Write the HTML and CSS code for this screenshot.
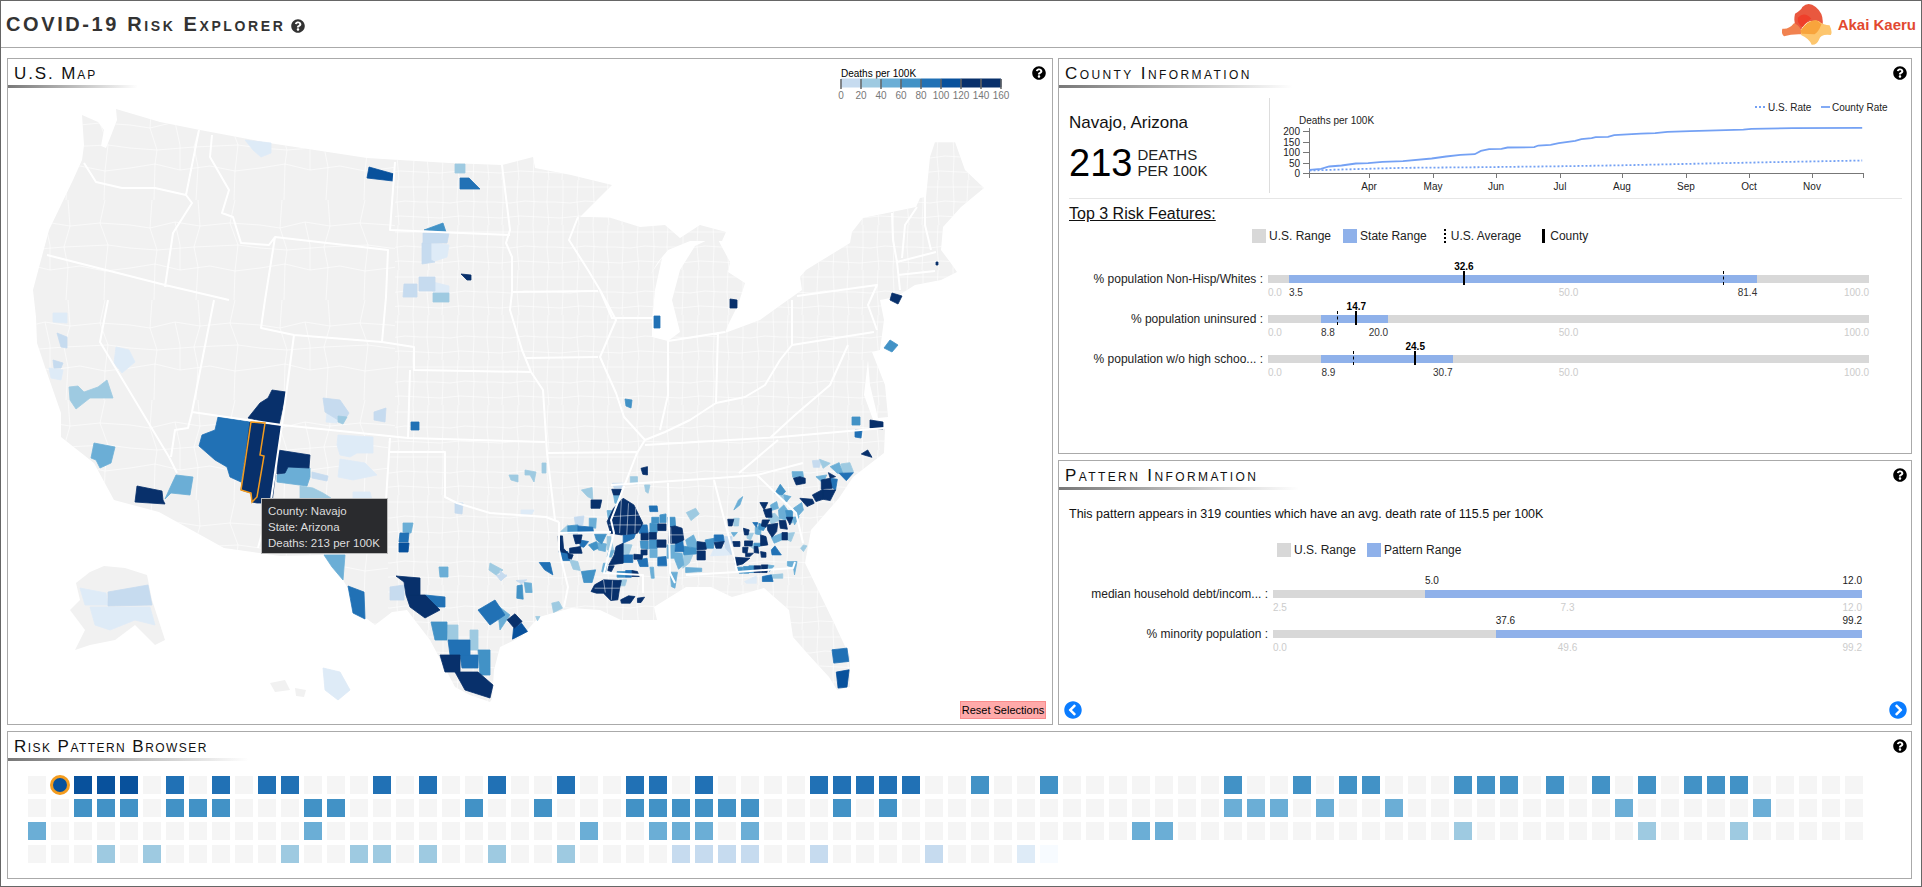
FILE: index.html
```html
<!DOCTYPE html>
<html lang="en">
<head>
<meta charset="utf-8">
<title>COVID-19 Risk Explorer</title>
<link rel="stylesheet" href="styles.css">
</head>
<body>
<svg class="defs" width="0" height="0" aria-hidden="true">
  <symbol id="i-help" viewBox="0 0 512 512"><path d="M504 256c0 136.997-111.043 248-248 248S8 392.997 8 256C8 119.083 119.043 8 256 8s248 111.083 248 248zM262.655 90c-54.497 0-89.255 22.957-116.549 63.758-3.536 5.286-2.353 12.415 2.715 16.258l34.699 26.31c5.205 3.947 12.621 3.008 16.665-2.122 17.864-22.658 30.113-35.797 57.303-35.797 20.429 0 45.698 13.148 45.698 32.958 0 14.976-12.363 22.667-32.534 33.976C247.128 238.528 216 254.941 216 296v4c0 6.627 5.373 12 12 12h56c6.627 0 12-5.373 12-12v-1.333c0-28.462 83.186-29.647 83.186-106.667 0-58.002-60.165-102-116.531-102zM256 338c-25.365 0-46 20.635-46 46 0 25.364 20.635 46 46 46s46-20.636 46-46c0-25.365-20.635-46-46-46z"/></symbol>
  <symbol id="i-left" viewBox="0 0 512 512"><path d="M256 504C119 504 8 393 8 256S119 8 256 8s248 111 248 248-111 248-248 248zM142.1 273l135.5 135.5c9.4 9.4 24.6 9.4 33.9 0l17-17c9.4-9.4 9.4-24.6 0-33.9L226.9 256l101.6-101.6c9.4-9.4 9.4-24.6 0-33.9l-17-17c-9.4-9.4-24.6-9.4-33.9 0L142.1 239c-9.4 9.4-9.4 24.6 0 34z"/></symbol>
  <symbol id="i-right" viewBox="0 0 512 512"><path d="M256 8c137 0 248 111 248 248S393 504 256 504 8 393 8 256 119 8 256 8zm113.9 231L234.4 103.5c-9.4-9.4-24.6-9.4-33.9 0l-17 17c-9.4 9.4-9.4 24.6 0 33.9L285.1 256 183.5 357.6c-9.4 9.4-9.4 24.6 0 33.9l17 17c9.4 9.4 24.6 9.4 33.9 0L369.9 273c9.4-9.4 9.4-24.6 0-34z"/></symbol>
</svg>
<div class="app">
  <header class="top">
    <h1 class="apptitle">COVID-19 Risk Explorer</h1>
    <svg class="help help-title"><use href="#i-help"/></svg>
    <div class="logo">
      <svg class="logo-mark" viewBox="1215 8 123 126" preserveAspectRatio="none">
        <path class="l-red" d="M1247 40Q1262 30 1265 20 1280 2 1298 20 1318 40 1315 72 1300 62 1285 62 1268 70 1262 88 1240 80 1247 40z"/>
        <path class="l-org" d="M1216 85Q1232 88 1245 68 1262 78 1266 102 1240 100 1220 108 1212 100 1216 85z"/>
        <path class="l-yel" d="M1262 90Q1280 55 1305 62 1318 75 1332 75 1340 95 1335 104 1310 100 1306 118 1300 135 1288 133 1282 115 1262 104z"/>
        <path class="l-dark" d="M1254 52Q1270 32 1287 55 1275 62 1266 80 1252 72 1254 52z"/>
        <path class="l-mid" d="M1260 92Q1278 58 1300 60L1312 72Q1305 95 1295 102L1264 100z"/>
      </svg>
      <span class="logo-text">Akai Kaeru</span>
    </div>
  </header>

  <main class="board">
    <section class="panel map-panel">
      <h2 class="ptitle ptitle-map">U.S. Map</h2>
      <svg class="help help-panel"><use href="#i-help"/></svg>
      <svg class="map" width="1044" height="636" viewBox="8 88 1044 636">
        <defs>
          <clipPath id="us"><path d="M82 115 98 122 104 130 101 146 106 148 112 133 117 120 116 109 160 122 200 130 269 143 367 158 449 163 502 165 533 157 535 168 571 175 612 185 580 217 608 217 640 227 665 225 680 238 700 225 726 232 722 241 690 241 668 250 658 262 650 275 662 258 655 290 652 320 652 337 668 341 680 332 672 300 680 270 695 246 716 236 730 262 728 272 745 283 738 305 728 325 725 333 760 320 785 302 802 290 800 277 806 270 850 243 852 232 863 218 916 207 920 198 926 197 930 157 935 142 955 142 965 170 984 188 961 207 943 227 941 250 950 262 957 272 941 280 915 285 896 297 880 300 884 320 880 350 872 352 885 385 888 417 878 418 870 385 868 360 864 395 875 425 885 429 884 453 853 477 839 498 811 530 805 563 836 627 850 657 850 687 837 690 829 677 807 653 793 637 789 610 764 588 732 597 711 587 686 587 654 607 657 620 621 620 600 610 571 608 539 617 521 637 500 647 494 670 492 699 490 702 470 695 455 687 430 640 407 610 392 612 375 625 362 615 346 585 343 580 324 555 280 556 224 548 159 512 114 500 94 463 61 437 61 413 45 367 37 343 36 317 33 290 49 230 73 180 82 160 84 145z"/></clipPath>
          <clipPath id="west"><path d="M8 88H395V440H388V724H8z"/></clipPath>
          <clipPath id="east"><path d="M395 88H1052V724H388V440H395z"/></clipPath>
          <pattern id="pw" width="130" height="100" patternUnits="userSpaceOnUse"><path class="cl" d="M0 25 20 28 45 22 70 26 100 23 130 25M0 68 25 64 50 70 80 66 105 71 130 68M22 0 20 28 27 50 25 64 24 100M68 0 70 26 64 47 68 67 66 100M105 0 100 23 108 45 105 71 104 100M45 22 50 45 50 70M0 48 27 50 64 47 108 45 130 48"/></pattern>
          <pattern id="pe" width="60" height="45" patternUnits="userSpaceOnUse"><path class="cl" d="M0 7H60M0 22 15 22 30 23 45 21 60 22M0 37 20 38 40 36 60 37M8 0 7 22 9 45M23 0 23 23 22 45M38 0 37 21 39 45M53 0 54 22 53 45"/></pattern>
        </defs>
        <g clip-path="url(#us)">
          <rect class="land" x="8" y="88" width="1044" height="636"/>
          <rect x="8" y="88" width="1044" height="636" fill="url(#pw)" clip-path="url(#west)"/>
          <rect x="8" y="88" width="1044" height="636" fill="url(#pe)" clip-path="url(#east)"/>
        </g>
        <!-- Alaska and Hawaii insets -->
        <path class="land" d="M76 583 90 572 104 566 125 568 147 575 152 600 165 640 155 645 135 625 115 640 90 645 75 650 85 630 70 610 80 600z"/>
        <path class="land" d="M270 683 285 680 290 690 275 692zM295 688 306 690 304 697 296 696zM323 668 340 672 350 690 338 700 325 690z"/>
        <path class="d1 ct" d="M80 588 106 593 108 605 85 605zM90 607 150 607 155 625 135 620 110 630 95 625zM323 668 340 672 350 690 338 700 325 690z"/>
        <path class="d2 ct" d="M108 592 148 585 152 605 108 606z"/>

        <!-- counties, north and west -->
        <path class="d1 ct" d="M245 140 271 143 271 153 261 157 253 150zM431 243 449 245 447 257 435 261 431 260zM433 282 449 286 449 293 433 292zM53 313 67 313 67 323 53 322zM49 368 63 370 61 380 51 378zM116 347 129 350 135 362 122 373 114 363zM327 413 338 417 337 423 326 422zM338 435 373 437 373 453 357 453 350 457 340 455 337 445zM340 459 365 463 377 475 353 480 338 477zM353 492 370 492 372 500 353 500zM521 510 534 510 532 514 521 514z"/>
        <path class="d2 ct" d="M423 233 449 233 447 243 423 243zM422 243 431 243 431 260 435 262 422 264zM419 277 435 277 435 291 419 291zM404 284 417 284 417 297 403 297zM57 333 67 337 67 348 61 347zM53 360 63 363 61 368 54 368zM323 398 340 400 349 413 343 423 325 412zM374 412 386 408 385 422 374 420zM312 472 328 476 327 481 312 478zM455 503 463 503 462 514 455 513zM496 575 507 575 501 581zM390 587 404 585 404 600 390 600z"/>
        <path class="d3 ct" d="M455 164 465 164 465 173 455 173zM433 293 449 293 449 302 433 302zM69 387 78 386 84 392 98 387 107 380 113 398 90 398 76 409 70 400zM300 486 313 488 323 493 331 498 335 515 300 505zM338 416 347 417 343 424 338 422zM490 563 503 570 496 575 489 570zM509 475 518 475 518 482 511 480zM525 470 536 472 534 482 530 475 525 475zM542 463 546 463 546 473 542 473zM447 625 458 625 458 640 448 640zM470 630 478 630 478 650 470 650z"/>
        <path class="d4 ct" d="M94 443 115 447 111 463 100 468 96 460 91 458zM176 475 193 477 190 495 171 493 165 499 169 490zM287 467 310 468 310 477 307 486 277 482 277 475 285 473zM324 555 345 555 343 580 332 567zM439 567 448 567 448 577 440 577zM497 605 510 615 500 630zM403 523 413 523 411 533 403 532z"/>
        <path class="d5 ct" d="M424 230 443 223 446 232zM625 399 632 400 631 408 626 406zM431 622 447 622 447 640 435 640zM478 650 490 650 490 675 480 675zM852 417 860 417 860 425 852 425zM890 340 898 345 892 352 884 348z"/>
        <path class="d6 ct" d="M460 178 469 178 480 189 460 189zM218 417 250 422 241 482 230 477 227 467 215 460 199 446 202 435 215 430zM411 422 419 422 419 430 411 430zM400 533 409 533 408 542 399 542zM348 586 364 592 365 619 353 613zM425 595 445 597 445 607 430 607zM448 640 470 640 470 655 450 655zM460 655 478 655 478 668 462 668zM478 610 495 600 505 615 490 625zM654 316 660 316 660 328 654 328zM855 430 862 430 861 438 855 437z"/>
        <path class="d7 ct" d="M369 167 394 174 393 181 367 178zM399 543 409 543 408 552 399 552z"/>
        <path class="d8 ct" d="M461 274 471 275 471 280 467 280zM272 390 286 392 279 425 248 418 260 403 268 398zM250 422 281 426 272 503 257 503 252 502 251 493 241 490zM278 450 310 455 309 468 288 467 285 473 277 474zM137 486 162 491 163 500 165 504 135 502zM396 576 420 578 420 595 406 595 404 582zM406 595 425 595 440 610 425 618 410 607zM440 655 460 655 460 672 445 672zM455 672 478 672 493 685 490 698 465 690zM936 262 938 262 938 265 936 265zM892 293 902 296 898 304 890 300zM730 299 737 300 737 308 730 308zM870 420 883 422 883 429 870 428z"/>

        <!-- counties, south east -->
        <g transform="translate(500 440) scale(.357 .333)">
          <path class="d1 ct" d="M600 325 630 320 645 345 590 348zM685 425 718 408 718 430 690 430z"/>
          <path class="d2 ct" d="M208 232 235 228 232 255 212 258zM315 130 345 130 340 145 320 145zM625 290 650 290 648 345 632 325zM875 62 900 60 895 82 878 82zM45 422 75 420 60 432zM0 392 18 410 0 420z"/>
          <path class="d3 ct" d="M170 275 190 255 195 280 175 280zM300 290 310 290 318 330 300 330zM365 110 385 110 385 132 365 130zM228 150 258 143 260 178 245 170zM405 135 420 135 415 160 408 155zM195 360 218 365 225 392 205 388zM335 420 355 420 350 438 335 438zM345 312 370 315 360 345 345 340zM515 345 540 345 530 370 512 385zM522 218 548 205 558 222 535 242zM655 235 670 235 668 258 655 258zM692 280 710 280 702 300 692 295zM805 280 825 278 815 305 805 300zM748 225 770 220 785 240 760 252zM770 160 790 162 810 170 805 185 790 175zM760 405 792 402 792 415 762 415zM955 72 980 68 990 95 958 98zM895 58 925 70 905 85zM850 315 860 318 850 335 842 325zM100 530 112 530 105 543zM145 490 165 485 175 505 150 518zM698 318 712 310 730 318 712 328z"/>
          <path class="d4 ct" d="M250 235 270 235 268 265 250 262zM270 308 298 312 295 335 275 330zM290 370 300 370 295 400 285 395zM420 382 430 382 432 415 424 415zM420 328 440 328 440 353 420 353zM468 315 490 315 488 355 468 355zM485 338 510 340 515 375 500 388 490 360zM520 300 542 285 552 310 550 325 525 320zM477 397 497 397 490 445 480 440zM520 383 565 385 565 395 520 398zM668 180 680 170 672 195 655 210zM648 278 665 278 655 290zM750 375 768 378 755 395zM805 365 832 365 825 405 822 382 805 378zM818 95 848 95 850 112 820 112zM795 165 815 170 800 188zM822 205 845 188 850 210 832 232zM758 195 775 185 780 205 760 212zM780 210 795 195 815 225 800 240 782 235zM818 232 838 230 825 255zM885 110 915 105 905 130zM925 80 950 68 960 100 945 100zM68 428 88 430 90 458 72 458zM300 212 315 212 310 235 303 235zM318 165 335 165 330 190 322 190zM715 262 732 258 730 285 715 282zM760 292 790 280 790 300 768 310zM305 332 320 332 312 352 300 350z"/>
          <path class="d5 ct" d="M190 258 218 255 218 280 190 280zM265 283 298 283 285 312 270 300zM248 315 270 305 275 325 262 332zM228 395 268 390 258 428 235 428zM328 395 352 395 352 412 328 412zM425 232 445 232 445 250 425 250zM448 225 465 222 465 248 448 248zM393 303 415 303 415 328 395 325zM470 232 490 232 492 262 472 262zM510 318 550 325 550 342 515 345zM575 300 600 295 598 325 575 325zM712 310 730 310 728 320 712 320zM725 250 745 258 738 272 725 268zM770 160 785 133 800 155 790 165zM665 382 680 382 680 400 670 400zM682 380 697 380 697 400 682 400zM697 378 712 378 712 398 697 398zM800 212 820 212 818 250 805 240zM48 438 62 435 65 478 47 475zM420 250 442 252 440 278 420 278zM418 300 440 300 440 326 418 326z"/>
          <path class="d6 ct" d="M218 258 260 262 262 278 218 278zM165 335 190 335 195 362 175 362zM222 300 248 305 235 322 225 320zM345 285 380 280 375 295 345 310zM345 345 372 345 372 368 345 368zM385 360 412 355 415 380 392 380zM352 392 370 392 368 412 352 412zM418 198 440 198 442 215 420 215zM390 255 412 255 415 280 390 280zM442 352 465 350 467 378 442 378zM492 302 512 302 515 335 490 335zM600 285 625 285 628 305 600 305zM708 248 722 248 718 262zM760 330 770 318 788 345 762 345zM735 410 760 405 765 425 735 425zM925 115 945 118 940 150 925 140zM950 100 990 98 970 122zM110 368 140 368 148 405 125 390zM930 630 972 625 977 665 935 670z"/>
          <path class="d7 ct" d="M38 565 60 550 77 575 35 598zM942 697 978 690 972 742 947 745z"/>
          <path class="d8 ct" d="M395 85 413 80 413 105 400 103zM313 148 340 148 335 165 318 165zM255 180 285 180 280 205 255 205zM163 288 175 288 178 325 190 340 165 335zM190 340 205 345 200 358 192 355zM205 285 230 285 225 310 212 312zM195 325 225 320 230 340 195 340zM318 205 345 175 375 195 400 250 385 280 340 285 310 280 300 245zM325 320 345 310 345 370 305 375 320 345zM375 343 400 345 398 358 375 358zM305 378 320 378 312 395 302 392zM370 392 385 395 390 410 370 410zM265 435 290 420 340 422 335 445 330 480 310 482 290 460 270 460 255 455zM338 480 360 468 378 470 365 490 340 490zM385 475 405 472 395 488 385 488zM442 252 465 252 465 272 442 272zM395 280 415 280 415 300 395 300zM418 278 438 278 438 298 418 298zM440 300 465 300 465 322 440 322zM395 330 412 330 412 345 395 345zM472 262 490 258 510 265 515 300 495 310 472 310zM552 305 575 308 578 328 552 330zM552 333 575 333 575 360 552 360zM600 308 628 305 620 325 605 325zM638 238 655 238 650 258 640 258zM682 265 698 270 695 285 685 285zM652 305 672 305 672 320 655 320zM685 303 708 303 706 318 685 318zM680 322 695 322 692 340 680 338zM688 340 710 340 700 350 688 350zM712 320 722 320 725 340 712 338zM730 285 745 290 750 315 730 318zM730 335 745 338 745 352 732 352zM655 352 700 355 680 372 660 378zM790 278 805 278 805 300 790 300zM728 188 750 188 740 210zM738 210 760 205 762 232 745 232zM735 240 755 240 745 262 732 258zM748 255 778 250 775 275 762 292 750 272zM782 242 800 242 805 268 785 265zM802 232 820 232 812 255zM712 378 730 378 730 398 712 398zM732 375 750 375 748 398 732 398zM840 110 855 115 855 130 830 135 822 115zM840 175 875 178 880 190 860 200zM875 165 905 148 905 178 885 185zM905 150 940 150 925 182 905 178zM900 120 925 115 930 145 900 148zM920 98 940 110 925 115zM1012 42 1030 30 1042 52 1020 45zM20 540 42 522 62 545 40 565z"/>
          <path class="ct-line" d="M340 180 335 280M360 190 355 285M312 230 395 225M305 255 395 255M380 205 378 280M290 420 295 458M315 422 312 480M265 445 335 445M478 262 480 310M472 285 515 285"/>
        </g>

        <!-- state lines -->
        <path class="st" d="M199 130 186 195 192 203 173 233 165 287M84 163 96 182 122 188 155 188 186 195M47 255 165 285 229 300M212 135 210 157 229 190 222 213 233 217 241 243 269 245 275 237 388 250 386 297M395 162 390 230 510 235M275 237 265 300 261 328 294 335 382 342 414 347 414 370 531 372M502 165 510 230 506 243 512 257 512 292 598 291M578 217 569 240 588 270 600 290 612 318 652 318M108 300 100 342 169 457 177 473M214 300 192 412 188 428 175 430 171 457M192 412 282 425 408 438 545 442M294 335 282 425 271 500 258 548M382 342 386 297M512 292 510 310 522 350 531 372 543 390 547 453 555 520M526 358 598 357M600 290 616 320 600 357 616 393 624 417 645 440 637 453 611 520 614 533 604 573 643 575 643 593M410 370 408 438M390 438 386 500M390 452 445 452 445 497 457 503 490 513 546 517 559 522M547 453 637 452M559 522 559 550 568 587 564 607M559 533 611 532M645 445 780 437 884 428M611 485 718 478 757 475 803 463M739 473 778 440M668 483 670 573 675 583M686 575 737 572 793 568 795 562M714 480 734 557 737 572M757 475 796 513 803 543M668 341 668 395 660 430M718 332 716 403M668 341 725 332M645 440 665 432 690 420 716 403 745 397 765 385 780 360 792 345 792 300M792 345 874 332M797 296 877 285 868 305 877 330M770 438 795 415 830 385 848 345M892 213 893 240 897 262 900 290M917 207 905 225 902 258M925 197 925 225 931 250M897 262 936 252M898 275 935 271"/>

        <path class="sel" d="M251 422 265 423 260 455 264 456 257 497 252 502 251 493 241 490z"/>

        <!-- map legend -->
        <text class="mlg-title" x="841" y="77">Deaths per 100K</text>
        <path class="d2 seg" d="M841 79h20v8h-20z"/><path class="d3 seg" d="M861 79h20v8h-20z"/><path class="d4 seg" d="M881 79h20v8h-20z"/><path class="d5 seg" d="M901 79h20v8h-20z"/><path class="d6 seg" d="M921 79h20v8h-20z"/><path class="d7 seg" d="M941 79h20v8h-20z"/><path class="d8 seg" d="M961 79h40v8h-40z"/>
        <path class="mlg-tick" d="M841 79v10M861 79v10M881 79v10M901 79v10M921 79v10M941 79v10M961 79v10M981 79v10M1001 79v10"/>
        <g class="mlg-num">
          <text x="841" y="99">0</text><text x="861" y="99">20</text><text x="881" y="99">40</text><text x="901" y="99">60</text><text x="921" y="99">80</text><text x="941" y="99">100</text><text x="961" y="99">120</text><text x="981" y="99">140</text><text x="1001" y="99">160</text>
        </g>
      </svg>
      <div class="tip">County: Navajo<br>State: Arizona<br>Deaths: 213 per 100K</div>
      <button class="reset" type="button">Reset Selections</button>
    </section>

    <div class="side">
      <section class="panel county-panel">
        <h2 class="ptitle">County Information</h2>
        <svg class="help help-panel"><use href="#i-help"/></svg>
        <div class="county-top">
          <div class="county-id">
            <div class="county-name">Navajo, Arizona</div>
            <div class="county-stat"><span class="stat-num">213</span><span class="stat-unit">DEATHS<br>PER 100K</span></div>
          </div>
          <svg class="chart" width="636" height="96" viewBox="1270 98 636 96">
            <text class="ch-title" x="1299" y="124">Deaths per 100K</text>
            <path class="ch-us ch-legend" d="M1755 107h11"/>
            <text class="ch-txt" x="1768" y="110.5">U.S. Rate</text>
            <path class="ch-cty ch-legend" d="M1821 107h9"/>
            <text class="ch-txt" x="1832" y="110.5">County Rate</text>
            <path class="ch-axis" d="M1303 131.5h6.5M1303 142.5h6.5M1303 152.5h6.5M1303 163.5h6.5M1303 173.5h560M1309.5 128v50M1369.5 173v5M1433.5 173v5M1496.5 173v5M1560.5 173v5M1622.5 173v5M1686.5 173v5M1749.5 173v5M1812.5 173v5M1863.5 173v5"/>
            <g class="ch-num">
              <text x="1300" y="135">200</text><text x="1300" y="146">150</text><text x="1300" y="156">100</text><text x="1300" y="167">50</text><text x="1300" y="177">0</text>
            </g>
            <g class="ch-mon">
              <text x="1369" y="190">Apr</text><text x="1433" y="190">May</text><text x="1496" y="190">Jun</text><text x="1560" y="190">Jul</text><text x="1622" y="190">Aug</text><text x="1686" y="190">Sep</text><text x="1749" y="190">Oct</text><text x="1812" y="190">Nov</text>
            </g>
            <g transform="translate(1280 0) scale(.41 .333)">
              <path class="ch-us" d="M72 512 150 509 300 504 500 502 700 499 850 496 1000 492 1200 487 1420 482"/>
              <path class="ch-cty" d="M72 510 100 507 120 500 150 497 185 491 215 490 250 486 300 484 370 476 405 470 440 465 475 463 490 453 510 448 540 447 555 443 620 442 630 437 660 435 680 430 720 423 735 418 760 415 770 412 800 411 815 406 880 401 915 400 945 396 1000 394 1130 389 1150 387 1250 385 1420 384"/>
            </g>
          </svg>
        </div>
        <div class="risk-head">Top 3 Risk Features:</div>
        <div class="legend legend-county">
          <span class="lg"><i class="sw sw-us"></i>U.S. Range</span>
          <span class="lg"><i class="sw sw-range"></i>State Range</span>
          <span class="lg lg-avg"><i class="key-avg"></i>U.S. Average</span>
          <span class="lg lg-cty"><i class="key-cty"></i>County</span>
        </div>
        <div class="bars bars-county">
          <div class="brow">
            <div class="blabel">% population Non-Hisp/Whites :</div>
            <div class="track">
              <div class="range" style="left:3.5%;width:77.9%"></div>
              <i class="avg" style="left:75.7%"></i><i class="cty" style="left:32.6%"></i>
              <span class="val" style="left:32.6%">32.6</span>
              <span class="sub" style="left:0">0.0</span><span class="sub sub-dark" style="left:3.5%">3.5</span><span class="sub sub-mid" style="left:50%">50.0</span><span class="sub sub-dark sub-end" style="left:81.4%">81.4</span><span class="sub sub-end" style="left:100%">100.0</span>
            </div>
          </div>
          <div class="brow">
            <div class="blabel">% population uninsured :</div>
            <div class="track">
              <div class="range" style="left:8.8%;width:11.2%"></div>
              <i class="avg" style="left:11.4%"></i><i class="cty" style="left:14.7%"></i>
              <span class="val" style="left:14.7%">14.7</span>
              <span class="sub" style="left:0">0.0</span><span class="sub sub-dark" style="left:8.8%">8.8</span><span class="sub sub-mid" style="left:50%">50.0</span><span class="sub sub-dark sub-end" style="left:20%">20.0</span><span class="sub sub-end" style="left:100%">100.0</span>
            </div>
          </div>
          <div class="brow">
            <div class="blabel">% population w/o high schoo... :</div>
            <div class="track">
              <div class="range" style="left:8.9%;width:21.8%"></div>
              <i class="avg" style="left:14.2%"></i><i class="cty" style="left:24.5%"></i>
              <span class="val" style="left:24.5%">24.5</span>
              <span class="sub" style="left:0">0.0</span><span class="sub sub-dark" style="left:8.9%">8.9</span><span class="sub sub-mid" style="left:50%">50.0</span><span class="sub sub-dark sub-end" style="left:30.7%">30.7</span><span class="sub sub-end" style="left:100%">100.0</span>
            </div>
          </div>
        </div>
      </section>

      <section class="panel pattern-panel">
        <h2 class="ptitle">Pattern Information</h2>
        <svg class="help help-panel"><use href="#i-help"/></svg>
        <p class="pattern-text">This pattern appears in 319 counties which have an avg. death rate of 115.5 per 100K</p>
        <div class="legend legend-pattern">
          <span class="lg"><i class="sw sw-us"></i>U.S. Range</span>
          <span class="lg"><i class="sw sw-range"></i>Pattern Range</span>
        </div>
        <div class="bars bars-pattern">
          <div class="brow">
            <div class="blabel">median household debt/incom... :</div>
            <div class="track">
              <div class="range" style="left:25.8%;width:74.2%"></div>
              <span class="val val-plain val-start" style="left:25.8%">5.0</span><span class="val val-plain val-end" style="left:100%">12.0</span>
              <span class="sub" style="left:0">2.5</span><span class="sub sub-mid" style="left:50%">7.3</span><span class="sub sub-end" style="left:100%">12.0</span>
            </div>
          </div>
          <div class="brow">
            <div class="blabel">% minority population :</div>
            <div class="track">
              <div class="range" style="left:37.8%;width:62.2%"></div>
              <span class="val val-plain val-start" style="left:37.8%">37.6</span><span class="val val-plain val-end" style="left:100%">99.2</span>
              <span class="sub" style="left:0">0.0</span><span class="sub sub-mid" style="left:50%">49.6</span><span class="sub sub-end" style="left:100%">99.2</span>
            </div>
          </div>
        </div>
        <svg class="nav nav-left"><use href="#i-left"/></svg>
        <svg class="nav nav-right"><use href="#i-right"/></svg>
      </section>
    </div>

    <section class="panel browser-panel">
      <h2 class="ptitle ptitle-risk">Risk Pattern Browser</h2>
      <svg class="help help-panel"><use href="#i-help"/></svg>
      <div class="pgrid">
        <i></i><i class="pick"></i><i class="b7"></i><i class="b7"></i><i class="b7"></i><i></i><i class="b6"></i><i></i><i class="b6"></i><i></i>
        <i class="b6"></i><i class="b6"></i><i></i><i></i><i></i><i class="b6"></i><i></i><i class="b6"></i><i></i><i></i>
        <i class="b6"></i><i></i><i></i><i class="b6"></i><i></i><i></i><i class="b6"></i><i class="b6"></i><i></i><i class="b6"></i>
        <i></i><i></i><i></i><i></i><i class="b6"></i><i class="b6"></i><i class="b6"></i><i class="b6"></i><i class="b6"></i><i></i>
        <i></i><i class="b5"></i><i></i><i></i><i class="b5"></i><i></i><i></i><i></i><i></i><i></i>
        <i></i><i></i><i class="b5"></i><i></i><i></i><i class="b5"></i><i></i><i class="b5"></i><i class="b5"></i><i></i>
        <i></i><i></i><i class="b5"></i><i class="b5"></i><i class="b5"></i><i></i><i class="b5"></i><i></i><i class="b5"></i><i></i>
        <i class="b5"></i><i></i><i class="b5"></i><i class="b5"></i><i class="b5"></i><i></i><i></i><i></i><i></i><i></i>

        <i></i><i></i><i class="b5"></i><i class="b5"></i><i class="b5"></i><i></i><i class="b5"></i><i class="b5"></i><i class="b5"></i><i></i>
        <i></i><i></i><i class="b5"></i><i class="b5"></i><i></i><i></i><i></i><i></i><i></i><i class="b5"></i>
        <i></i><i></i><i class="b5"></i><i></i><i></i><i></i><i class="b5"></i><i class="b5"></i><i class="b5"></i><i class="b5"></i>
        <i class="b5"></i><i class="b5"></i><i></i><i></i><i></i><i class="b5"></i><i></i><i class="b5"></i><i></i><i></i>
        <i></i><i></i><i></i><i></i><i></i><i></i><i></i><i></i><i></i><i></i>
        <i></i><i></i><i class="b4"></i><i class="b4"></i><i class="b4"></i><i></i><i class="b4"></i><i></i><i></i><i class="b4"></i>
        <i></i><i></i><i></i><i></i><i></i><i></i><i></i><i></i><i></i><i class="b4"></i>
        <i></i><i></i><i></i><i></i><i></i><i class="b4"></i><i></i><i></i><i></i><i></i>

        <i class="b4"></i><i></i><i></i><i></i><i></i><i></i><i></i><i></i><i></i><i></i>
        <i></i><i></i><i class="b4"></i><i></i><i></i><i></i><i></i><i></i><i></i><i></i>
        <i></i><i></i><i></i><i></i><i class="b4"></i><i></i><i></i><i class="b4"></i><i class="b4"></i><i class="b4"></i>
        <i></i><i class="b4"></i><i></i><i></i><i></i><i></i><i></i><i></i><i></i><i></i>
        <i></i><i></i><i></i><i></i><i></i><i></i><i></i><i></i><i class="b4"></i><i class="b4"></i>
        <i></i><i></i><i></i><i></i><i></i><i></i><i></i><i></i><i></i><i></i>
        <i></i><i></i><i class="b3"></i><i></i><i></i><i></i><i></i><i></i><i></i><i></i>
        <i class="b3"></i><i></i><i></i><i></i><i class="b3"></i><i></i><i></i><i></i><i></i><i></i>

        <i></i><i></i><i></i><i class="b3"></i><i></i><i class="b3"></i><i></i><i></i><i></i><i></i>
        <i></i><i class="b3"></i><i></i><i></i><i class="b3"></i><i class="b3"></i><i></i><i class="b3"></i><i></i><i></i>
        <i class="b3"></i><i></i><i></i><i class="b3"></i><i></i><i></i><i></i><i></i><i class="b2"></i><i class="b2"></i>
        <i class="b2"></i><i class="b2"></i><i></i><i></i><i class="b2"></i><i></i><i></i><i></i><i></i><i class="b2"></i>
        <i></i><i></i><i></i><i class="b1"></i><i class="b0"></i>
      </div>
    </section>
  </main>
</div>
</body>
</html>
```

FILE: styles.css
```css
html, body { margin: 0; height: 100%; overflow: hidden; background: #fff; }
body, button { font-family: "Liberation Sans", Arial, sans-serif; color: #000; }
.defs { position: absolute; }

.app { box-sizing: border-box; width: 1922px; height: 887px; border: 1px solid #666; display: flex; flex-direction: column; }

/* header */
.top { flex: none; box-sizing: border-box; height: 47px; border-bottom: 1px solid #aaa; display: flex; align-items: center; padding: 0 5px; }
.apptitle { margin: 0; font-size: 20px; font-weight: bold; font-variant: small-caps; letter-spacing: 2.6px; color: #333; line-height: 24px; }
.help { display: block; fill: #000; width: 14px; height: 14px; }
.help-title { fill: #333; margin: 3px 0 0 6px; }
.logo { margin-left: auto; display: flex; align-items: center; }
.logo-mark { width: 50px; height: 42px; display: block; }
.l-red { fill: #e9583f; } .l-org { fill: #f18250; } .l-yel { fill: #fdc66e; } .l-dark { fill: #ef3f2a; } .l-mid { fill: #f8a43c; }
.logo-text { margin-left: 6px; font-size: 15px; font-weight: bold; color: #e2492f; }

/* board */
.board { flex: 1; min-height: 0; box-sizing: border-box; padding: 10px 9px 7px 6px; display: grid; grid-template-columns: 1046px 854px; grid-template-rows: 667px 148px; column-gap: 5px; row-gap: 6px; }
.panel { box-sizing: border-box; border: 1px solid #aaa; background: #fff; position: relative; display: flex; flex-direction: column; min-width: 0; min-height: 0; }
.ptitle { align-self: flex-start; margin: 0; box-sizing: border-box; height: 29px; padding: 5px 40px 1px 6px; font-size: 17px; line-height: 20px; font-weight: normal; font-variant: small-caps; letter-spacing: 2.4px; color: #111; border-bottom: 3px solid; border-image: linear-gradient(to right, #777, #fff) 1; }
.ptitle-map { letter-spacing: 1.9px; }
.ptitle-risk { letter-spacing: 1.45px; }
.help-panel { position: absolute; top: 7px; right: 4px; }
.map-panel .help-panel { right: 6px; }
.side { display: grid; grid-template-rows: 396px 265px; row-gap: 6px; min-height: 0; }
.browser-panel { grid-column: 1 / 3; }

/* map */
.map { display: block; overflow: visible; }
.land { fill: #f1f1f1; }
.cl { fill: none; stroke: #fff; stroke-width: .6; }
.st { fill: none; stroke: #fff; stroke-width: 2; stroke-linejoin: round; }
.ct { stroke-width: .8; stroke-linejoin: round; vector-effect: non-scaling-stroke; }
.seg { stroke: none; }
.ct-line { fill: none; stroke: #fff; stroke-width: .5; vector-effect: non-scaling-stroke; }
.sel { fill: none; stroke: #f39c1f; stroke-width: 1.5; }
.d1 { fill: #deebf7; stroke: #deebf7; } .d2 { fill: #c6dbef; stroke: #c6dbef; } .d3 { fill: #9ecae1; stroke: #9ecae1; } .d4 { fill: #6baed6; stroke: #6baed6; }
.d5 { fill: #4292c6; stroke: #4292c6; } .d6 { fill: #2171b5; stroke: #2171b5; } .d7 { fill: #08519c; stroke: #08519c; } .d8 { fill: #08306b; stroke: #08306b; }
.mlg-title { font-size: 10px; fill: #000; }
.mlg-tick { fill: none; stroke: #666; stroke-width: 1.5; }
.mlg-num { font-size: 10px; fill: #777; text-anchor: middle; }
.tip { position: absolute; left: 253px; top: 439px; box-sizing: border-box; width: 127px; height: 56px; padding: 4px 6px; background: #2a2b2e; border: 1px solid #bbb; color: #ddd; font-size: 11.5px; line-height: 16px; white-space: nowrap; }
.reset { position: absolute; right: 6px; bottom: 5px; box-sizing: border-box; width: 86px; height: 18px; padding: 0; background: #ffaaaa; border: 1px solid #f98b8b; font-size: 11px; line-height: 16px; color: #000; }

/* county */
.county-top { display: flex; align-items: flex-start; margin: 10px 9px 0 10px; height: 100px; border-bottom: 1px solid #e6e6e6; }
.county-id { box-sizing: border-box; flex: none; width: 201px; height: 95px; border-right: 1px solid #ddd; }
.county-name { margin-top: 15px; font-size: 17px; line-height: 20px; color: #111; }
.county-stat { display: flex; align-items: center; margin-top: 8px; }
.stat-num { font-size: 38px; line-height: 44px; }
.stat-unit { margin-left: 5px; font-size: 15px; line-height: 16.5px; color: #222; }
.chart { display: block; flex: none; overflow: visible; }
.ch-title, .ch-txt { font-size: 10px; fill: #222; }
.ch-axis { fill: none; stroke: #777; stroke-width: 1; }
.ch-num { font-size: 10px; fill: #222; text-anchor: end; }
.ch-mon { font-size: 10px; fill: #222; text-anchor: middle; }
.ch-cty, .ch-us { fill: none; stroke: #74a1f4; stroke-width: 1.8; vector-effect: non-scaling-stroke; }
.ch-us { stroke-dasharray: 2 2; }
.risk-head { margin: 5px 0 0 10px; font-size: 16px; line-height: 20px; text-decoration: underline; color: #111; }

/* legends */
.legend { display: flex; align-items: center; height: 14px; font-size: 12px; color: #222; column-gap: 12px; }
.legend-county { margin: 5px 0 0 193px; }
.legend-pattern { margin: 21px 0 0 218px; column-gap: 11px; }
.lg { display: flex; align-items: center; column-gap: 3px; white-space: nowrap; }
.lg-avg { margin-left: 5px; column-gap: 5px; }
.lg-cty { margin-left: 9px; column-gap: 5px; }
.sw { display: block; width: 14px; height: 14px; }
.sw-us { background: #d8d8d8; }
.sw-range { background: #8fb1ea; }
.key-avg { display: block; height: 14px; border-left: 2px dotted #000; }
.key-cty { display: block; width: 3px; height: 14px; background: #000; }

/* range bars */
.bars-county { margin: 16px 0 0 0; }
.bars-pattern { margin: 17px 0 0 0; }
.brow { display: flex; align-items: center; column-gap: 5px; height: 40px; font-size: 12px; }
.blabel { flex: none; text-align: right; white-space: nowrap; color: #222; }
.bars-county .blabel { width: 204px; }
.bars-pattern .blabel { width: 209px; }
.track { position: relative; flex: none; height: 8px; background: #d8d8d8; }
.bars-county .track { width: 601px; }
.bars-pattern .track { width: 589px; }
.range { position: absolute; top: 0; bottom: 0; background: #8fb1ea; }
.cty, .avg { position: absolute; top: -4px; bottom: -2px; display: block; }
.cty { width: 2px; margin-left: -1px; background: #000; }
.avg { border-left: 1px dashed #000; }
.val { position: absolute; bottom: 11px; transform: translateX(-50%); font-size: 10px; line-height: 11px; font-weight: bold; color: #000; white-space: nowrap; }
.val-plain { font-weight: normal; color: #222; bottom: 12px; }
.val-start { transform: none; }
.val-end { transform: translateX(-100%); }
.sub { position: absolute; top: 12px; font-size: 10px; line-height: 11px; color: #ccc; white-space: nowrap; }
.sub-dark { color: #333; }
.sub-mid { transform: translateX(-50%); }
.sub-end { transform: translateX(-100%); }

/* pattern */
.pattern-text { margin: 16px 0 0 10px; font-size: 12.5px; line-height: 16px; color: #111; }
.nav { position: absolute; bottom: 5px; width: 18px; height: 18px; fill: #0a7cff; }
.nav-left { left: 5px; }
.nav-right { right: 4px; }

/* browser */
.pgrid { display: grid; grid-template-columns: repeat(80, 18px); grid-auto-rows: 18px; gap: 5px; margin: 15px 0 0 20px; }
.pgrid i { display: block; background: #f5f5f5; }
.pgrid .b0 { background: #f7fbff; } .pgrid .b1 { background: #deebf7; } .pgrid .b2 { background: #c6dbef; } .pgrid .b3 { background: #9ecae1; }
.pgrid .b4 { background: #6baed6; } .pgrid .b5 { background: #4292c6; } .pgrid .b6 { background: #2171b5; } .pgrid .b7 { background: #08519c; }
.pgrid .pick { box-sizing: border-box; margin: -1px; border: 3px solid #f39c1f; border-radius: 50%; background: #08519c; }
```
